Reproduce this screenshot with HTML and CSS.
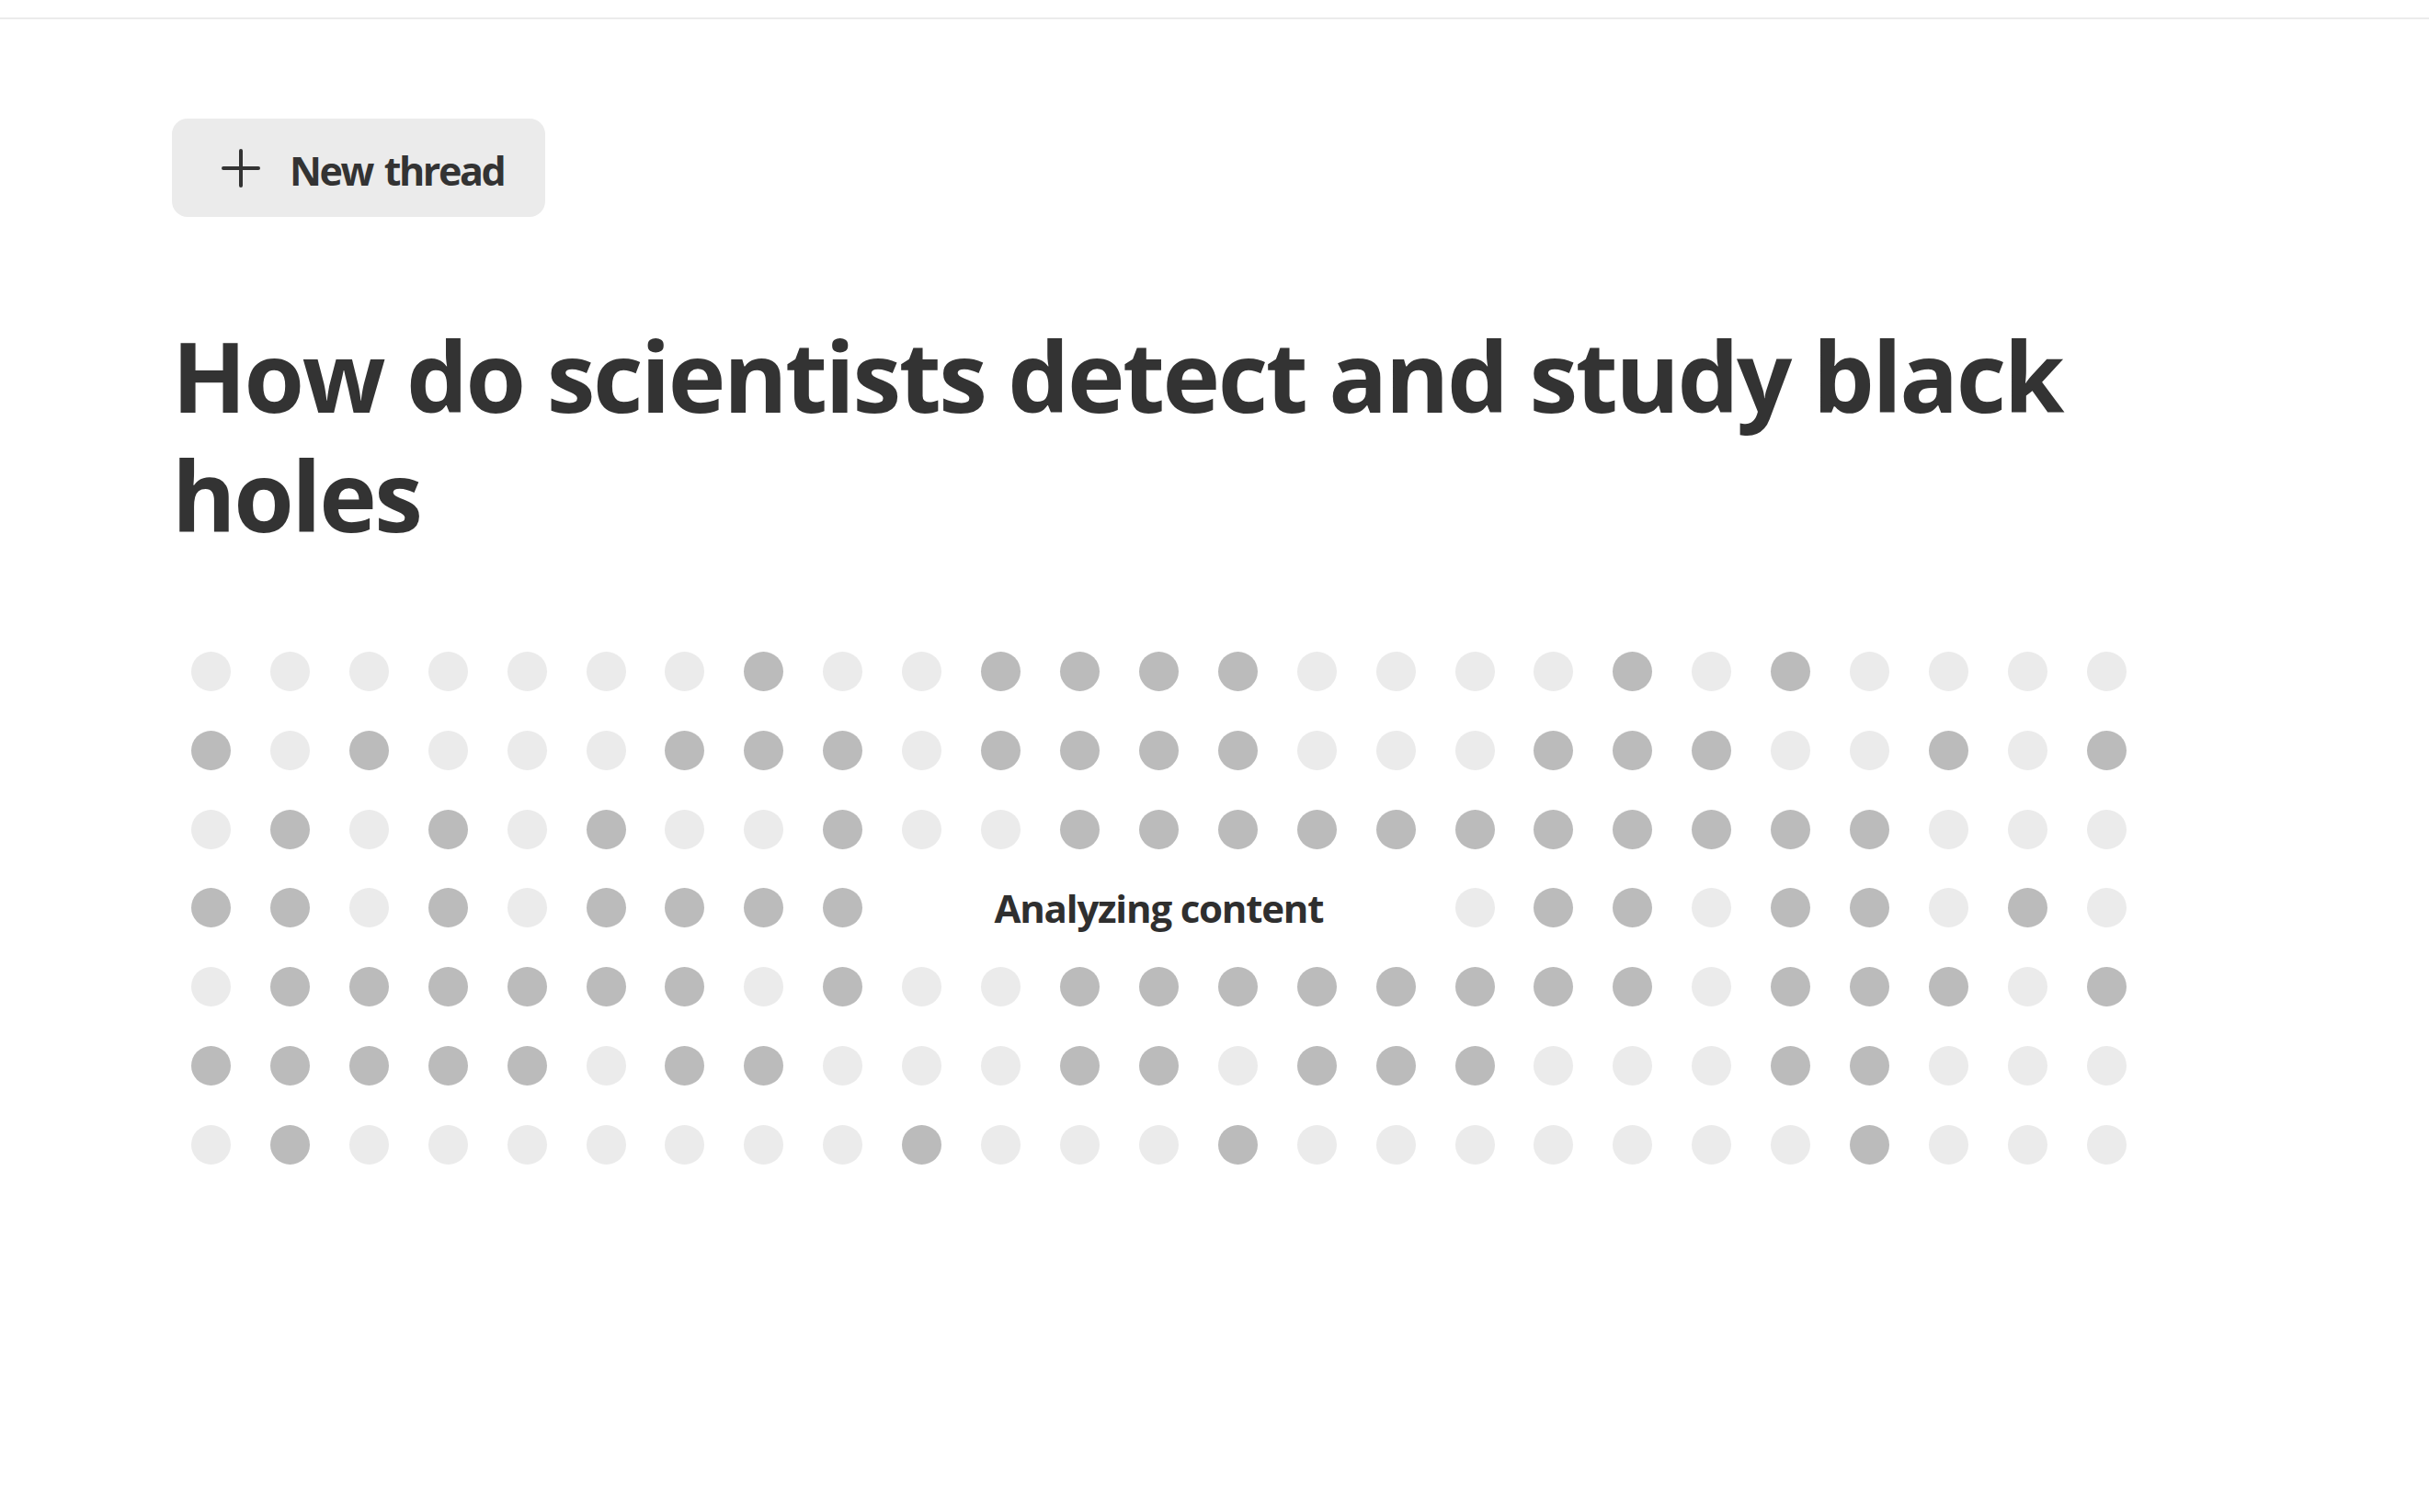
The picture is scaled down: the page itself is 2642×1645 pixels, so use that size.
FILE: index.html
```html
<!DOCTYPE html>
<html lang="en">
<head>
<meta charset="utf-8">
<title>New thread</title>
<link rel="stylesheet" href="styles.css">
</head>
<body>
<div class="topbar"></div>
<main class="content">
  <button class="new-thread" type="button">
    <svg class="plus" viewBox="0 0 42 42" width="42" height="42" aria-hidden="true">
      <path d="M21 2V40M2 21H40" stroke="#333" stroke-width="4" stroke-linecap="round" fill="none"/>
    </svg>
    <span class="label">New thread</span>
  </button>
  <h1 class="title">How do scientists detect and study black holes</h1>
  <div class="grid">
    <i class="d l"></i><i class="d l"></i><i class="d l"></i><i class="d l"></i><i class="d l"></i><i class="d l"></i><i class="d l"></i><i class="d k"></i><i class="d l"></i><i class="d l"></i><i class="d k"></i><i class="d k"></i><i class="d k"></i><i class="d k"></i><i class="d l"></i><i class="d l"></i><i class="d l"></i><i class="d l"></i><i class="d k"></i><i class="d l"></i><i class="d k"></i><i class="d l"></i><i class="d l"></i><i class="d l"></i><i class="d l"></i>
    <i class="d k"></i><i class="d l"></i><i class="d k"></i><i class="d l"></i><i class="d l"></i><i class="d l"></i><i class="d k"></i><i class="d k"></i><i class="d k"></i><i class="d l"></i><i class="d k"></i><i class="d k"></i><i class="d k"></i><i class="d k"></i><i class="d l"></i><i class="d l"></i><i class="d l"></i><i class="d k"></i><i class="d k"></i><i class="d k"></i><i class="d l"></i><i class="d l"></i><i class="d k"></i><i class="d l"></i><i class="d k"></i>
    <i class="d l"></i><i class="d k"></i><i class="d l"></i><i class="d k"></i><i class="d l"></i><i class="d k"></i><i class="d l"></i><i class="d l"></i><i class="d k"></i><i class="d l"></i><i class="d l"></i><i class="d k"></i><i class="d k"></i><i class="d k"></i><i class="d k"></i><i class="d k"></i><i class="d k"></i><i class="d k"></i><i class="d k"></i><i class="d k"></i><i class="d k"></i><i class="d k"></i><i class="d l"></i><i class="d l"></i><i class="d l"></i>
    <i class="d k"></i><i class="d k"></i><i class="d l"></i><i class="d k"></i><i class="d l"></i><i class="d k"></i><i class="d k"></i><i class="d k"></i><i class="d k"></i><span class="status">Analyzing content</span><i class="d l"></i><i class="d k"></i><i class="d k"></i><i class="d l"></i><i class="d k"></i><i class="d k"></i><i class="d l"></i><i class="d k"></i><i class="d l"></i>
    <i class="d l"></i><i class="d k"></i><i class="d k"></i><i class="d k"></i><i class="d k"></i><i class="d k"></i><i class="d k"></i><i class="d l"></i><i class="d k"></i><i class="d l"></i><i class="d l"></i><i class="d k"></i><i class="d k"></i><i class="d k"></i><i class="d k"></i><i class="d k"></i><i class="d k"></i><i class="d k"></i><i class="d k"></i><i class="d l"></i><i class="d k"></i><i class="d k"></i><i class="d k"></i><i class="d l"></i><i class="d k"></i>
    <i class="d k"></i><i class="d k"></i><i class="d k"></i><i class="d k"></i><i class="d k"></i><i class="d l"></i><i class="d k"></i><i class="d k"></i><i class="d l"></i><i class="d l"></i><i class="d l"></i><i class="d k"></i><i class="d k"></i><i class="d l"></i><i class="d k"></i><i class="d k"></i><i class="d k"></i><i class="d l"></i><i class="d l"></i><i class="d l"></i><i class="d k"></i><i class="d k"></i><i class="d l"></i><i class="d l"></i><i class="d l"></i>
    <i class="d l"></i><i class="d k"></i><i class="d l"></i><i class="d l"></i><i class="d l"></i><i class="d l"></i><i class="d l"></i><i class="d l"></i><i class="d l"></i><i class="d k"></i><i class="d l"></i><i class="d l"></i><i class="d l"></i><i class="d k"></i><i class="d l"></i><i class="d l"></i><i class="d l"></i><i class="d l"></i><i class="d l"></i><i class="d l"></i><i class="d l"></i><i class="d k"></i><i class="d l"></i><i class="d l"></i><i class="d l"></i>
  </div>
</main>
</body>
</html>
```

FILE: styles.css
```css
html, body {
  margin: 0;
  padding: 0;
  background: #ffffff;
}
body {
  font-family: "Open Sans", "Noto Sans", "Liberation Sans", sans-serif;
  color: #333333;
}
.topbar {
  height: 19px;
  border-bottom: 2px solid #ebebeb;
}
.content {
  padding: 108px 187px 0 187px;
}
.new-thread {
  display: flex;
  align-items: center;
  box-sizing: border-box;
  height: 107px;
  width: 406px;
  padding: 0 0 0 54px;
  border: none;
  border-radius: 17px;
  background: #ebebeb;
  font-family: inherit;
  color: #333333;
  cursor: pointer;
}
.plus {
  flex: none;
  display: block;
}
.label {
  margin-left: 32px;
  padding-top: 5px;
  font-size: 43px;
  font-weight: 700;
  line-height: 1;
  letter-spacing: -2.4px;
  word-spacing: 4px;
  white-space: nowrap;
}
.title {
  margin: 107px 0 0 0;
  font-size: 106px;
  line-height: 130px;
  font-weight: 700;
  letter-spacing: -2.5px;
  color: #333333;
}
.grid {
  margin: 106px 0 0 21px;
  width: 2105px;
  height: 558px;
  display: grid;
  grid-template-columns: repeat(25, 43px);
  grid-template-rows: repeat(7, 43px);
  justify-content: space-between;
  align-content: space-between;
}
.d {
  display: block;
  width: 43px;
  height: 43px;
  border-radius: 50%;
}
.l { background: #ebebeb; }
.k { background: #bbbbbb; }
.status {
  grid-column: span 7;
  display: flex;
  align-items: center;
  justify-content: center;
  font-size: 42px;
  font-weight: 700;
  letter-spacing: -1.2px;
  white-space: nowrap;
  color: #2f2f2f;
}
```
